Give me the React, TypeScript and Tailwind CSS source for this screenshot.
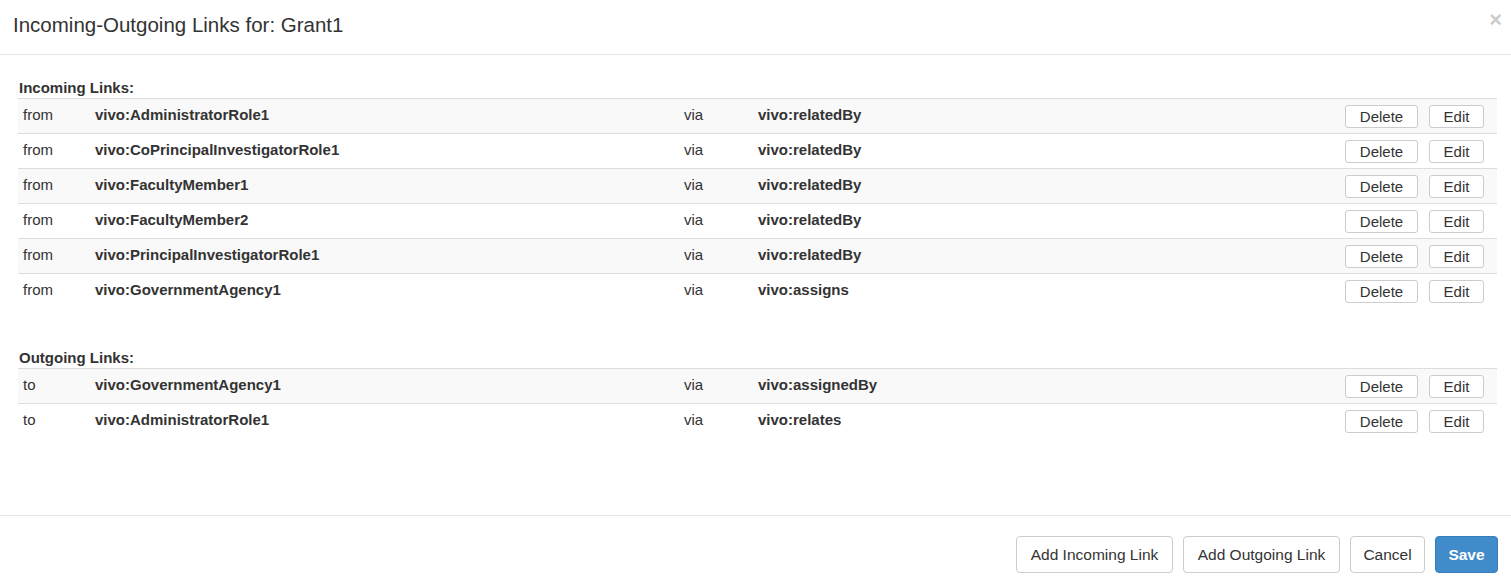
import React from "react";

type Link = { dir: string; node: string; pred: string };

const incoming: Link[] = [
  { dir: "from", node: "vivo:AdministratorRole1", pred: "vivo:relatedBy" },
  { dir: "from", node: "vivo:CoPrincipalInvestigatorRole1", pred: "vivo:relatedBy" },
  { dir: "from", node: "vivo:FacultyMember1", pred: "vivo:relatedBy" },
  { dir: "from", node: "vivo:FacultyMember2", pred: "vivo:relatedBy" },
  { dir: "from", node: "vivo:PrincipalInvestigatorRole1", pred: "vivo:relatedBy" },
  { dir: "from", node: "vivo:GovernmentAgency1", pred: "vivo:assigns" },
];

const outgoing: Link[] = [
  { dir: "to", node: "vivo:GovernmentAgency1", pred: "vivo:assignedBy" },
  { dir: "to", node: "vivo:AdministratorRole1", pred: "vivo:relates" },
];

const LinkTable = ({ title, rows }: { title: string; rows: Link[] }) => (
  <div>
    <div className="h-[21px] leading-[21px] pl-px text-[15px] font-bold">{title}</div>
    <div>
      {rows.map((r, i) => (
        <div
          key={r.node + i}
          className={`flex items-start h-[35px] border-t border-[#dddddd] ${
            i % 2 === 0 ? "bg-[#f9f9f9]" : "bg-white"
          }`}
        >
          <div className="w-[77px] pl-[5px] pt-[6px] text-[15px] leading-[20px]">{r.dir}</div>
          <div className="w-[589px] pt-[6px] text-[15px] leading-[20px] font-bold">{r.node}</div>
          <div className="w-[74px] pt-[6px] text-[15px] leading-[20px]">via</div>
          <div className="flex-1 pt-[6px] text-[15px] leading-[20px] font-bold">{r.pred}</div>
          <div className="flex gap-[11px] pr-[13px] pt-[6px]">
            <button className="w-[73px] h-[23px] rounded-[3px] border border-[#cccccc] bg-white text-[15px] leading-[21px] text-[#333]">
              Delete
            </button>
            <button className="w-[55px] h-[23px] rounded-[3px] border border-[#cccccc] bg-white text-[15px] leading-[21px] text-[#333]">
              Edit
            </button>
          </div>
        </div>
      ))}
    </div>
  </div>
);

export default function App() {
  return (
    <div
      className="w-[1511px] h-[585px] bg-white text-[#333333] overflow-hidden flex flex-col"
      style={{ fontFamily: '"Liberation Sans", Arial, sans-serif' }}
    >
      <div className="h-[55px] border-b border-[#e5e5e5] flex items-center justify-between pl-[13px] pr-[9px] shrink-0">
        <h4 className="text-[20.5px] leading-[24px] pb-[4px]">Incoming-Outgoing Links for: Grant1</h4>
        <button className="text-[22px] font-bold leading-none text-black opacity-20 pb-[14px]">×</button>
      </div>
      <div className="flex-1 pl-[18px] pr-[14px] pt-[22px] flex flex-col gap-[39px]">
        <LinkTable title="Incoming Links:" rows={incoming} />
        <LinkTable title="Outgoing Links:" rows={outgoing} />
      </div>
      <div className="h-[70px] border-t border-[#e5e5e5] flex justify-end items-start gap-[10px] pt-[20px] pr-[13px] shrink-0">
        <button className="w-[157px] h-[37px] rounded-[4px] border border-[#cccccc] bg-white text-[15.5px]">
          Add Incoming Link
        </button>
        <button className="w-[157px] h-[37px] rounded-[4px] border border-[#cccccc] bg-white text-[15.5px]">
          Add Outgoing Link
        </button>
        <button className="w-[75px] h-[37px] rounded-[4px] border border-[#cccccc] bg-white text-[15.5px]">
          Cancel
        </button>
        <button className="w-[63px] h-[37px] rounded-[4px] border border-[#357ebd] bg-[#428bca] text-white font-bold text-[15.5px]">
          Save
        </button>
      </div>
    </div>
  );
}
